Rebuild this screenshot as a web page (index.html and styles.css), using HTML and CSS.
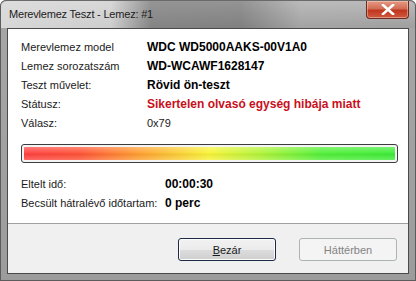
FILE: index.html
```html
<!DOCTYPE html>
<html lang="hu">
<head>
    <meta charset="UTF-8">
    <title>Merevlemez Teszt - Lemez: #1</title>
    <link rel="stylesheet" href="styles.css">
</head>
<body>
    <div class="window">
        <div class="titlebar">
            <span class="title">Merevlemez Teszt - Lemez: #1</span>
            <div class="close-btn">
                <svg width="14" height="11" viewBox="0 0 14 11">
                    <path d="M2 1 L12 10 M12 1 L2 10" stroke="#ffffff" stroke-width="2.6" stroke-linecap="square"/>
                </svg>
            </div>
        </div>

        <div class="client">
            <div class="panel">
                <div class="row">
                    <span class="label">Merevlemez model</span>
                    <span class="value">WDC WD5000AAKS-00V1A0</span>
                </div>
                <div class="row">
                    <span class="label">Lemez sorozatszám</span>
                    <span class="value">WD-WCAWF1628147</span>
                </div>
                <div class="row">
                    <span class="label">Teszt művelet:</span>
                    <span class="value">Rövid ön-teszt</span>
                </div>
                <div class="row">
                    <span class="label">Státusz:</span>
                    <span class="value error">Sikertelen olvasó egység hibája miatt</span>
                </div>
                <div class="row">
                    <span class="label">Válasz:</span>
                    <span class="plain">0x79</span>
                </div>

                <div class="progress">
                    <div class="progress-fill"></div>
                </div>

                <div class="times">
                    <div class="row time-row">
                        <span class="label">Eltelt idő:</span>
                        <span class="value">00:00:30</span>
                    </div>
                    <div class="row time-row">
                        <span class="label">Becsült hátralévő időtartam:</span>
                        <span class="value">0 perc</span>
                    </div>
                </div>
            </div>

            <div class="buttons">
                <button class="btn default"><u>B</u>ezár</button>
                <button class="btn" disabled>Háttérben</button>
            </div>
        </div>
    </div>
</body>
</html>
```

FILE: styles.css
```css
body {
    margin: 0;
    padding: 0;
    background-color: #ffffff;
    font-family: 'Liberation Sans', Arial, sans-serif;
    font-size: 11px;
}

.window {
    width: 416px;
    height: 281px;
    box-sizing: border-box;
    padding: 0 7px 7px 7px;
    display: flex;
    flex-direction: column;
    border-radius: 6px 6px 0 0;
    background: linear-gradient(to bottom, #b9b9b9 0px, #a6a6a6 27px, #9c9c9c 100%);
    box-shadow: inset 0 0 0 1px #5c5c5c;
}

.titlebar {
    height: 27px;
    display: flex;
    align-items: flex-start;
    margin: 0 -6px;
    padding: 0 6px;
    background:
        linear-gradient(to right, rgba(225, 225, 225, 0.85) 0px, rgba(225, 225, 225, 0.7) 110px, rgba(110, 110, 110, 0.55) 150px, rgba(90, 90, 90, 0.45) 240px, rgba(170, 170, 170, 0.35) 300px, rgba(160, 160, 160, 0.25) 416px),
        linear-gradient(to bottom, #c4c4c4 0%, #9e9e9e 100%);
    border-radius: 6px 6px 0 0;
    border-top: 1px solid #6a6a6a;
}

.title {
    margin-top: 7px;
    margin-left: 2px;
    color: #1c1c1c;
    font-size: 11px;
    letter-spacing: -0.2px;
}

.close-btn {
    margin-left: auto;
    width: 43px;
    height: 18px;
    box-sizing: border-box;
    border: 1px solid #6b2a22;
    border-top: none;
    border-radius: 0 0 4px 4px;
    background: linear-gradient(to bottom, #e59a85 0%, #d26d55 45%, #c0361e 55%, #cf5a40 100%);
    display: flex;
    align-items: center;
    justify-content: center;
    box-shadow: inset 0 0 0 1px rgba(255, 220, 200, 0.45);
}

.client {
    flex: 1;
    display: flex;
    flex-direction: column;
    border: 1px solid #4a4a4a;
    background-color: #f0f0f0;
}

.panel {
    background-color: #ffffff;
    border-bottom: 1px solid #a0a0a0;
    padding: 8px 10px 0 13px;
    height: 195px;
    box-sizing: border-box;
}

.row {
    display: flex;
    align-items: center;
    height: 19px;
}

.label {
    width: 126px;
    color: #1a1a1a;
    flex-shrink: 0;
}

.times {
    margin-top: 11px;
}

.time-row .label {
    width: 144px;
}

.value {
    font-weight: bold;
    font-size: 12px;
    color: #000000;
}

.plain {
    color: #1a1a1a;
}

.error {
    color: #c8101c;
}

.progress {
    margin-top: 12px;
    height: 19px;
    box-sizing: border-box;
    border: 1px solid #3c3c3c;
    border-radius: 3px;
    padding: 2px;
    background-color: #f4f4f4;
}

.progress-fill {
    height: 100%;
    border-radius: 1px;
    background:
        linear-gradient(to bottom, rgba(255, 255, 255, 0.3) 0%, rgba(255, 255, 255, 0.05) 45%, rgba(0, 0, 0, 0.04) 55%, rgba(255, 255, 255, 0.2) 100%),
        linear-gradient(to right, #ff4040 0%, #ff5236 15%, #ff9a30 30%, #f8f438 50%, #b0f438 64%, #52f038 80%, #3eec38 100%);
}

.buttons {
    flex: 1;
    display: flex;
    justify-content: flex-end;
    align-items: flex-start;
    gap: 23px;
    padding: 14px 11px 0 0;
}

.btn {
    width: 98px;
    height: 23px;
    font-family: 'Liberation Sans', Arial, sans-serif;
    font-size: 11px;
    color: #1a1a1a;
    border: 1px solid #707070;
    border-radius: 3px;
    background: linear-gradient(to bottom, #f2f2f2 0%, #ebebeb 50%, #dddddd 51%, #cfcfcf 100%);
    box-shadow: inset 0 0 0 1px #fcfcfc;
    padding: 0;
}

.btn.default {
    border-color: #1c2a44;
}

.btn:disabled {
    color: #838383;
    border-color: #adb2b5;
    background: #f4f4f4;
    box-shadow: none;
}
```
